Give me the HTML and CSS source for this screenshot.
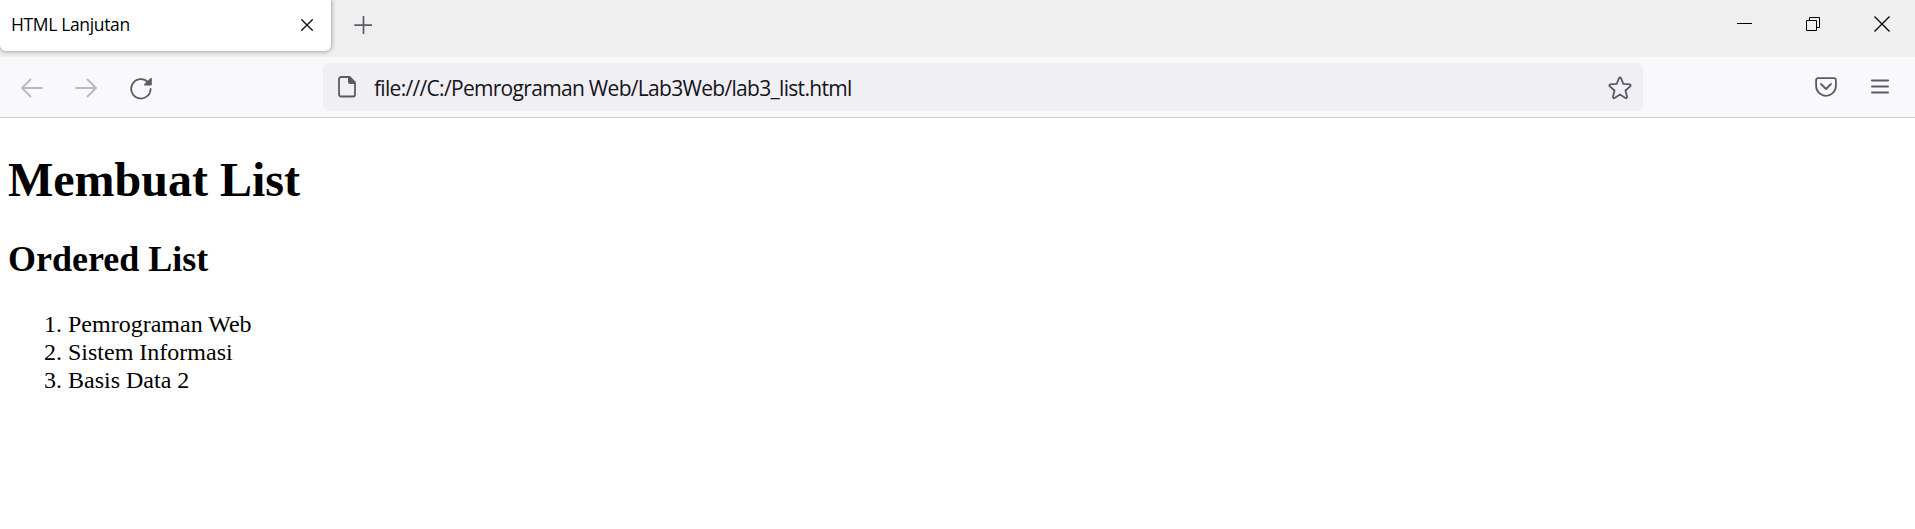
FILE: index.html
```html
<!DOCTYPE html>
<html lang="id">
<head>
<meta charset="utf-8">
<title>HTML Lanjutan</title>
<link rel="stylesheet" href="styles.css">
</head>
<body>
<header class="tabbar">
  <div class="tab">
    <span class="tab-title">HTML Lanjutan</span>
    <svg class="tab-close" width="12" height="12" viewBox="0 0 12 12"><path d="M.7.7l10.6 10.6M11.3.7L.7 11.3"/></svg>
  </div>
  <svg class="new-tab" width="18" height="18" viewBox="0 0 18 18"><path d="M9.500 .8v16.400M1 9.200h16.400"/></svg>
  <div class="window-controls">
    <svg width="16" height="16" viewBox="0 0 16 16"><path d="M1 7.500h15"/></svg>
    <svg width="16" height="16" viewBox="0 0 16 16"><path d="M1.500 4.500h10v10h-10zM4.500 4.500v-3h10v10h-3"/></svg>
    <svg class="win-close" width="16" height="16" viewBox="0 0 16 16"><path d="M.5.500l15 15M15.500.500l-15 15"/></svg>
  </div>
</header>
<nav class="toolbar">
  <div class="nav-buttons">
    <svg class="disabled" width="22" height="20" viewBox="0 0 22 20"><path d="M21 10H1.200M9.500 1.500L1 10l8.500 8.500"/></svg>
    <svg class="disabled" width="22" height="20" viewBox="0 0 22 20"><path d="M1 10h19.800M12.500 1.500L21 10l-8.500 8.500"/></svg>
    <svg width="24" height="24" viewBox="0 0 24 24"><path d="M21.600 13A9.700 9.700 0 1 1 19 6.200"/><path class="solid" d="M22.800 2.400v6.200q0 .8-.8.800h-6.400c-.7 0-.9-.7-.4-1.200l6.400-6.300c.5-.5 1.200-.2 1.200.5z"/></svg>
  </div>
  <div class="urlbar">
    <svg width="20" height="24" viewBox="0 0 20 24"><path d="M4 2h8.500L18 7.500V19.500a2 2 0 0 1-2 2H4a2 2 0 0 1-2-2V4a2 2 0 0 1 2-2z"/><path class="solid" d="M11 1.500h1.500l6 6V9H13a2 2 0 0 1-2-2z"/></svg>
    <span class="url">file:///C:/Pemrograman Web/Lab3Web/lab3_list.html</span>
    <svg class="star" width="24" height="24" viewBox="0 0 24 24"><path d="M11 2.100q1-1.600 2 0l2.300 5.800 6.200.5q2 .4.700 1.900l-4.700 4.200 1.500 6.200q.1 1.900-1.600 1.200L12 18.600 6.600 21.900q-1.700.7-1.600-1.200l1.500-6.200-4.700-4.200q-1.300-1.500.7-1.900l6.200-.5z"/></svg>
  </div>
  <div class="actions">
    <svg width="22" height="20" viewBox="0 0 22 20"><path d="M3 1.200h16a1.900 1.900 0 0 1 1.900 1.900v6a9.900 9.700 0 0 1-19.800 0v-6A1.900 1.900 0 0 1 3 1.200z"/><path d="M6 7l5 5 5-5"/></svg>
    <svg width="18" height="18" viewBox="0 0 18 18"><path d="M.9 2.500h16.200M.9 8.500h16.200M.9 14.500h16.200"/></svg>
  </div>
</nav>
<main class="page">
  <h1>Membuat List</h1>
  <h2>Ordered List</h2>
  <ol>
    <li>Pemrograman Web</li>
    <li>Sistem Informasi</li>
    <li>Basis Data 2</li>
  </ol>
</main>
</body>
</html>
```
FILE: styles.css
```css
* { box-sizing: border-box; }
body { margin: 0; background: #fff; color: #000; overflow: hidden; }
svg { display: block; flex: none; fill: none; stroke: #5b5b66; stroke-width: 1.8; stroke-linecap: round; stroke-linejoin: round; }
.solid { fill: #5b5b66; stroke: none; }
.tabbar { display: flex; height: 57px; background: #efefef; font-family: "Open Sans", sans-serif; }
.tab { display: flex; align-items: center; justify-content: space-between; width: 331px; height: 51px; padding: 0 18px 2px 11px; background: #fff; border-radius: 0 0 6px 6px; box-shadow: 0 0 5px rgba(0,0,0,.45); }
.tab-title { padding-bottom: 2px; font-size: 17.5px; letter-spacing: -.35px; white-space: nowrap; }
.tab-close { stroke: #15141a; stroke-width: 1.4; }
.new-tab { margin: 16px 0 0 23px; stroke-width: 1.7; }
.window-controls { display: flex; gap: 53px; margin: 16px 25px 0 auto; }
.window-controls svg { stroke: #000; stroke-width: 1; stroke-linecap: butt; stroke-linejoin: miter; }
.window-controls .win-close { stroke-width: 1.3; }
.toolbar { display: flex; align-items: center; height: 61px; padding-right: 26px; background: #f9f9fb; border-bottom: 1px solid #cccccf; }
.nav-buttons { display: flex; align-items: center; gap: 32px; width: 323px; padding: 2px 0 0 21px; }
.nav-buttons .disabled { stroke: #b8b8bf; }
.urlbar { display: flex; align-items: center; width: 1320px; height: 48px; padding: 0 11px 0 14px; background: #f0eff4; border-radius: 6px; }
.url { margin: 2px auto 0 17px; color: #15141a; font: 21px/28px "Open Sans", sans-serif; letter-spacing: -.69px; white-space: nowrap; }
.star { margin-top: 1px; }
.actions { display: flex; align-items: center; gap: 34px; margin-left: auto; }
.page { padding: 34px 8px 0; font-family: "Liberation Serif", "Times New Roman", serif; }
h1 { margin: 0; font-size: 48px; line-height: 56px; }
h2 { margin: 31px 0 0; font-size: 36px; line-height: 40px; }
ol { margin: 31px 0 0; padding-left: 60px; font-size: 24px; line-height: 28px; }
```
